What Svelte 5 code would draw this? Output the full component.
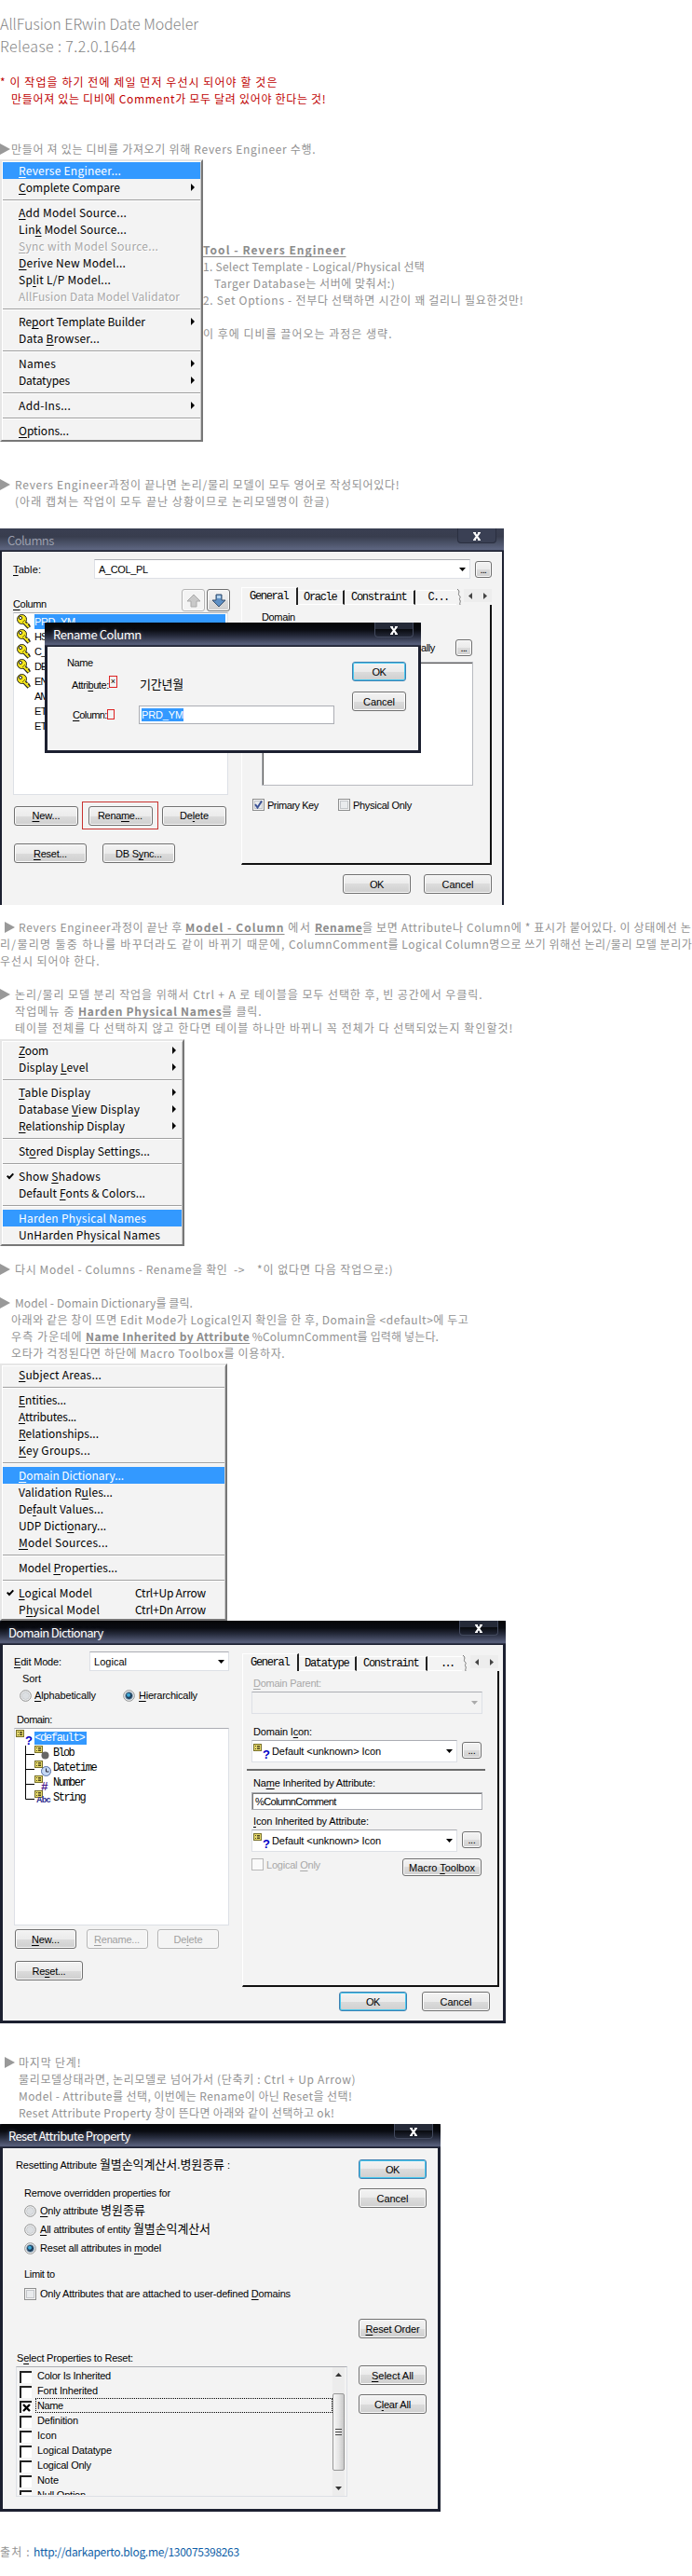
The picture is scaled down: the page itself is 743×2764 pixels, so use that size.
<script>
  const menuReverse = [
    { t: '~Reverse Engineer...', w: 110, on: true },
    { t: '~Complete Compare', w: 109, sub: true },
    null,
    { t: '~Add Model Source...', w: 116 },
    { t: 'Lin~k Model Source...', w: 116 },
    { t: '~Sync with Model Source...', w: 150, off: true },
    { t: '~Derive New Model...', w: 115 },
    { t: 'Sp~lit L/P Model...', w: 99 },
    { t: 'AllFusion Data Model Validator', w: 173, off: true },
    null,
    { t: 'Re~port Template Builder', w: 136, sub: true },
    { t: 'Data ~Browser...', w: 87 },
    null,
    { t: 'Names', w: 40, sub: true },
    { t: 'Datatypes', w: 55, sub: true },
    null,
    { t: 'Add-Ins...', w: 56, sub: true },
    null,
    { t: '~Options...', w: 54 }
  ];
  const menuDisplay = [
    { t: '~Zoom', w: 32, sub: true },
    { t: 'Display ~Level', w: 75, sub: true },
    null,
    { t: '~Table Display', w: 77, sub: true },
    { t: 'Database ~View Display', w: 130, sub: true },
    { t: '~Relationship Display', w: 114, sub: true },
    null,
    { t: 'St~ored Display Settings...', w: 141 },
    null,
    { t: 'Show ~Shadows', w: 88, check: true },
    { t: 'Default ~Fonts & Colors...', w: 136 },
    null,
    { t: 'Harden Physical Names', w: 137, on: true },
    { t: 'UnHarden Physical Names', w: 152 }
  ];
  const menuModel = [
    { t: '~Subject Areas...', w: 89 },
    null,
    { t: '~Entities...', w: 51 },
    { t: '~Attributes...', w: 62 },
    { t: '~Relationships...', w: 86 },
    { t: '~Key Groups...', w: 77 },
    null,
    { t: '~Domain Dictionary...', w: 113, on: true },
    { t: 'Validation R~ules...', w: 101 },
    { t: 'De~fault Values...', w: 91 },
    { t: 'UDP Dicti~onary...', w: 94 },
    { t: '~Model Sources...', w: 96 },
    null,
    { t: 'Model ~Properties...', w: 106 },
    null,
    { t: '~Logical Model', w: 79, check: true, key: 'Ctrl+Up Arrow' },
    { t: 'P~hysical Model', w: 87, key: 'Ctrl+Dn Arrow' }
  ];
  const columns = [
    { t: 'PRD_YM', w: 44, key: true },
    { t: 'HS', w: 14, key: true },
    { t: 'C_', w: 13, key: true },
    { t: 'DE', w: 14, key: true },
    { t: 'EN', w: 14, key: true },
    { t: 'AM', w: 15 },
    { t: 'ET', w: 13 },
    { t: 'ET', w: 13 }
  ];
  const domains = [
    { t: 'Blob', w: 23, kind: 'blob' },
    { t: 'Datetime', w: 47, kind: 'clock' },
    { t: 'Number', w: 35, kind: 'hash' },
    { t: 'String', w: 35, kind: 'abc' }
  ];
  const props = [
    { t: 'Color Is Inherited', w: 79 },
    { t: 'Font Inherited', w: 65 },
    { t: 'Name', w: 28, on: true },
    { t: 'Definition', w: 44 },
    { t: 'Icon', w: 21 },
    { t: 'Logical Datatype', w: 80 },
    { t: 'Logical Only', w: 58 },
    { t: 'Note', w: 23 },
    { t: 'Null Option', w: 52 }
  ];

  // Splits a caption at each ~ so that the following letter is underlined.
  function parts(s) {
    return s.split('~').map((p, i) => (i ? [p[0], p.slice(1)] : ['', p]));
  }

  // Tracks a run of text so that it fills the given width.
  function fit(node, w) {
    const n = [...node.textContent].length;
    const natural = node.getBoundingClientRect().width;
    if (n > 1) node.style.letterSpacing = (w - natural) / (n - 0.5) + 'px';
    node.style.width = w + 'px';
  }
</script>

{#snippet t(s, w)}<span class="t" use:fit={w}>{#each parts(s) as [u, rest]}{#if u}<u>{u}</u>{/if}{rest}{/each}</span>{/snippet}
{#snippet b(s, w)}<b class="t" use:fit={w}>{s}</b>{/snippet}
{#snippet tri()}<svg class="tri" width="11" height="12" viewBox="0 0 11 12"><path d="M0 0L11 6L0 12z" fill="#999" /></svg>{/snippet}

{#snippet menu(items, cls)}
  <div class="menu {cls}">
    {#each items as m}
      {#if m}
        <div class="mi" class:on={m.on} class:off={m.off}>
          <span class="mark">{#if m.check}<svg width="8" height="8" viewBox="0 0 8 8"><path d="M.7 3.6L3 6L7.3 1.4" fill="none" stroke="#000" stroke-width="2" /></svg>{/if}</span>
          {@render t(m.t, m.w)}
          {#if m.key}<span class="short">{@render t(m.key, 76)}</span>{/if}
          {#if m.sub}<svg class="sub" width="4" height="8" viewBox="0 0 4 8"><path d="M0 0L4 4L0 8z" /></svg>{/if}
        </div>
      {:else}
        <div class="sep"></div>
      {/if}
    {/each}
  </div>
{/snippet}

{#snippet title(s, w)}
  <div class="title">
    {@render t(s, w)}
    <span class="close"><svg width="8" height="9" viewBox="0 0 8 9"><path d="M1.3 .8L6.7 8.2M6.7 .8L1.3 8.2" stroke="#fff" stroke-width="2.1" /><path d="M0 .7H3M5 .7H8M0 8.3H3M5 8.3H8" stroke="#fff" stroke-width="1.2" /></svg></span>
  </div>
{/snippet}
{#snippet btn(s, w, cls)}<span class="btn {cls}">{@render t(s, w)}</span>{/snippet}
{#snippet caret()}<svg class="caret" width="7" height="4" viewBox="0 0 7 4"><path d="M0 0H7L3.5 4z" fill="currentColor" /></svg>{/snippet}
{#snippet radio(on)}
  <svg class="radio" width="13" height="13" viewBox="0 0 13 13">
    <circle cx="6.5" cy="6.5" r="5.8" fill="#f6f6f6" stroke="#8e8f8f" />
    <circle cx="6.5" cy="6.5" r="4" fill={on ? '#1d3e5c' : '#dcdfe2'} stroke={on ? '#9db7cc' : '#bfc3c7'} stroke-width=".7" />
    {#if on}<circle cx="6" cy="5.8" r="2" fill="#3da9d8" />{/if}
  </svg>
{/snippet}
{#snippet tag()}
  <svg class="tag" width="9" height="8" viewBox="0 0 9 8"><rect x=".5" y=".5" width="8" height="7" fill="#e6d96c" stroke="#77702c" /><path d="M2 2.5H3M4 2.5H7M2 5.5H3M4 5.5H7M4 4H7" stroke="#4a4520" /></svg>
{/snippet}
{#snippet unknown()}
  <span class="unk">{@render tag()}<i>?</i></span>
{/snippet}
{#snippet spin()}
  <svg class="brk" width="6" height="17" viewBox="0 0 6 17"><path d="M1 0C5 3 1 5 3 7C6 9 2 10 4 12C5 14 3 15 4 17" fill="none" stroke="#777" /></svg>
  <span class="spin">
    <svg width="4" height="7" viewBox="0 0 4 7"><path d="M4 0V7L0 3.5z" fill="#444" /></svg>
    <svg width="4" height="7" viewBox="0 0 4 7"><path d="M0 0V7L4 3.5z" fill="#444" /></svg>
  </span>
{/snippet}

<main>
  <header>
    <div>{@render t('AllFusion ERwin Date Modeler', 213)}</div>
    <div>{@render t('Release : 7.2.0.1644', 146)}</div>
  </header>
  <section class="warn">
    <div class="ln">{@render t('* 이 작업을 하기 전에 제일 먼저 우선시 되어야 할 것은', 298)}</div>
    <div class="ln in12">{@render t('만들어져 있는 디비에 Comment가 모두 달려 있어야 한다는 것!', 338)}</div>
  </section>
  <div class="ln s-first">{@render tri()}<span class="g1"></span>{@render t('만들어 져 있는 디비를 가져오기 위해 Revers Engineer 수행.', 327)}</div>
  <div class="beside">
    {@render menu(menuReverse, 'm1')}
    <div class="notes">
      <div class="ln">{@render b('Tool - Revers Engineer', 153)}</div>
      <div class="ln">{@render t('1. Select Template - Logical/Physical 선택', 238)}</div>
      <div class="ln in12">{@render t('Targer Database는 서버에 맞춰서:)', 194)}</div>
      <div class="ln">{@render t('2. Set Options - 전부다 선택하면 시간이 꽤 걸리니 필요한것만!', 344)}</div>
      <div class="ln"></div>
      <div class="ln">{@render t('이 후에 디비를 끌어오는 과정은 생략.', 203)}</div>
    </div>
  </div>

  <section class="s-done">
    <div class="ln">{@render tri()}<span class="g5"></span>{@render t('Revers Engineer과정이 끝나면 논리/물리 모델이 모두 영어로 작성되어있다!', 413)}</div>
    <div class="ln in16">{@render t('(아래 캡쳐는 작업이 모두 끝난 상황이므로 논리모델명이 한글)', 338)}</div>
  </section>

  <div class="dlg d1">
    {@render title('Columns', 50)}
    <div class="body">
      <div class="trow">
        <span class="lbl">{@render t('~Table:', 30)}</span>
        <span class="combo">{@render t('A_COL_PL', 53)}{@render caret()}</span>
        {@render btn('...', 7, 'dots')}
      </div>
      <div class="cols">
        <div class="left">
          <div class="head">
            <span class="lbl">{@render t('~Column', 36)}</span>
            <span class="btn arrow dis"><svg width="16" height="15" viewBox="0 0 16 15"><path d="M8 1L15 8H11V14H5V8H1z" fill="#c9c9c9" stroke="#aaa" /></svg></span>
            <span class="btn arrow"><svg width="16" height="15" viewBox="0 0 16 15"><path d="M5 1H11V7H15L8 14L1 7H5z" fill="#5d8fc4" stroke="#37506e" /><path d="M6 2H10V5H6z" fill="#b5d3ee" /></svg></span>
          </div>
          <div class="list">
            {#each columns as c, i}
              <div class="row">
                <span class="ico">{#if c.key}<svg width="15" height="16" viewBox="0 0 15 16"><path d="M7 8L13 14.5M10 11L12 9.5M11.5 13L14 11.5" stroke="#222" stroke-width="4" /><circle cx="5.5" cy="5.5" r="5" fill="#f3e51c" stroke="#222" /><path d="M7.5 8.5L13 14M10.5 11.5L12 10" stroke="#f3e51c" stroke-width="2" /><circle cx="4" cy="4" r="1.6" fill="#fff" stroke="#222" /><path d="M6 9L9 6" stroke="#77700a" /></svg>{/if}</span>
                <span class="val" class:sel={i === 0}>{@render t(c.t, c.w)}</span>
              </div>
            {/each}
          </div>
          <div class="btns">
            {@render btn('~New...', 30, 'w69')}
            <span class="red">{@render btn('Rena~me...', 48, 'w69')}</span>
            {@render btn('De~lete', 31, 'w69')}
          </div>
          <div class="btns2">
            {@render btn('~Reset...', 36, 'w78')}
            {@render btn('DB S~ync...', 50, 'w78')}
          </div>
        </div>
        <div class="right">
          <div class="tabs">
            <span class="tab cur">{@render t('General', 42)}</span>
            <span class="tab a">{@render t('Oracle', 36)}</span>
            <span class="tab c">{@render t('Constraint', 60)}</span>
            <span class="tab last">{@render t('C...', 23)}</span>
            {@render spin()}
          </div>
          <div class="panel">
            <div class="dom">{@render t('Domain', 36)}</div>
            <div class="ally">{@render t('ally', 15)}{@render btn('...', 7, 'dots')}</div>
            <div class="sunk"></div>
            <div class="checks">
              <span class="cb"><svg width="9" height="9" viewBox="0 0 9 9"><path d="M1 4L3.5 7.5L8 .5" fill="none" stroke="#3c5396" stroke-width="2" /></svg></span>{@render t('Primary Key', 55)}
              <span class="cb two"></span>{@render t('Physical Only', 63)}
            </div>
          </div>
        </div>
      </div>
      <div class="foot">{@render btn('OK', 15, 'w73')}{@render btn('Cancel', 34, 'w73')}</div>
    </div>

    <div class="dlg rename">
      {@render title('Rename Column', 95)}
      <div class="body">
        <div class="fields">
          <div class="nm">{@render t('Name', 28)}</div>
          <div class="at">{@render t('Attri~bute:', 40)}<span class="rb">×</span><span class="kor">{@render t('기간년월', 47)}</span></div>
          <div class="co">{@render t('~Column:', 37)}<span class="rb small"></span><span class="inp"><span class="hl">{@render t('PRD_YM', 45)}</span></span></div>
        </div>
        <div class="side">
          {@render btn('OK', 15, 'def')}
          {@render btn('Cancel', 34, '')}
        </div>
      </div>
    </div>
  </div>

  <section class="s-split">
    <div class="ln in5">{@render tri()}<span class="g4"></span>{@render t('Revers Engineer과정이 끝난 후 ', 179)}{@render b('Model - Column', 106)}{@render t(' 에서 ', 33)}{@render b('Rename', 51)}{@render t('을 보면 Attribute나 Column에 * 표시가 붙어있다. 이 상태에선 논', 353)}</div>
    <div class="ln">{@render t('리/물리명 둘중 하나를 바꾸더라도 같이 바뀌기 때문에, ', 310)}{@render t('ColumnComment를 Logical Column명으로 쓰기 위해선 논리/물리 모델 분리가', 433)}</div>
    <div class="ln">{@render t('우선시 되어야 한다.', 107)}</div>
  </section>
  <section class="s-gap">
    <div class="ln">{@render tri()}<span class="g5"></span>{@render t('논리/물리 모델 분리 작업을 위해서 Ctrl + A 로 테이블을 모두 선택한 후, 빈 공간에서 우클릭.', 502)}</div>
    <div class="ln in16">{@render t('작업메뉴 중 ', 68)}{@render b('Harden Physical Names', 154)}{@render t('를 클릭.', 43)}</div>
    <div class="ln in16">{@render t('테이블 전체를 다 선택하지 않고 한다면 테이블 하나만 바뀌니 꼭 전체가 다 선택되었는지 확인할것!', 535)}</div>
  </section>
  {@render menu(menuDisplay, 'm2')}

  <div class="ln s-again">{@render tri()}<span class="g5"></span>{@render t('다시 Model - Columns - Rename을 확인  ->    ', 260)}{@render t('*이 없다면 다음 작업으로:)', 146)}</div>
  <section class="s-gap">
    <div class="ln">{@render tri()}<span class="g5"></span>{@render t('Model - Domain Dictionary를 클릭.', 191)}</div>
    <div class="ln in12">{@render t('아래와 같은 창이 뜨면 Edit Mode가 Logical인지 확인을 한 후, Domain을 <default>에 두고', 491)}</div>
    <div class="ln in12">{@render t('우측 가운데에 ', 80)}{@render b('Name Inherited by Attribute', 176)}{@render t(' %ColumnComment를 입력해 넣는다.', 203)}</div>
    <div class="ln in12">{@render t('오타가 걱정된다면 하단에 Macro Toolbox를 이용하자.', 294)}</div>
  </section>
  {@render menu(menuModel, 'm3')}

  <div class="dlg d2">
    {@render title('Domain Dictionary', 102)}
    <div class="body">
      <div class="cols">
        <div class="left">
          <div class="edit"><span class="lbl">{@render t('~Edit Mode:', 51)}</span><span class="combo">{@render t('Logical', 35)}{@render caret()}</span></div>
          <div class="sort">{@render t('Sort', 20)}</div>
          <div class="rads">{@render radio(false)}{@render t('~Alphabetically', 66)}<span class="r2">{@render radio(true)}</span>{@render t('~Hierarchically', 63)}</div>
          <div class="dl">{@render t('Domain:', 38)}</div>
          <div class="list">
            <div class="root">{@render unknown()}<span class="hl">{@render t('<default>', 54)}</span></div>
            {#each domains as d, i}
              <div class="node">
                <svg class="branch" width="10" height="16" viewBox="0 0 10 16"><path d={i === 3 ? 'M.5 0V9.5H10' : 'M.5 0V16M0 9.5H10'} fill="none" stroke="#000" /></svg>
                <span class="nico">
                  {@render tag()}
                  {#if d.kind === 'blob'}<svg class="kind" width="9" height="9" viewBox="0 0 9 9"><circle cx="4.5" cy="4.5" r="4" fill="#666" /></svg>
                  {:else if d.kind === 'clock'}<svg class="kind" width="11" height="11" viewBox="0 0 11 11"><circle cx="5.5" cy="5.5" r="5" fill="#c4d8f4" stroke="#536da5" /><path d="M5.5 2.5V6H8.5" fill="none" stroke="#223" /></svg>
                  {:else if d.kind === 'hash'}<i class="kind hash">#</i>
                  {:else}<i class="kind abc">Abc</i>{/if}
                </span>
                {@render t(d.t, d.w)}
              </div>
            {/each}
          </div>
          <div class="btns">{@render btn('~New...', 30, 'w66')}{@render btn('~Rename...', 49, 'w66 dis')}{@render btn('De~lete', 31, 'w66 dis')}</div>
          <div class="btns2">{@render btn('Re~set...', 36, 'w73')}</div>
        </div>
        <div class="right">
          <div class="tabs">
            <span class="tab cur">{@render t('General', 42)}</span>
            <span class="tab a">{@render t('Datatype', 48)}</span>
            <span class="tab c">{@render t('Constraint', 60)}</span>
            <span class="tab last">{@render t('...', 15)}</span>
            {@render spin()}
          </div>
          <div class="panel">
            <div class="pl off">{@render t('~Domain Parent:', 73)}</div>
            <div class="combo dead">{@render caret()}</div>
            <div class="pl l2">{@render t('Domain I~con:', 63)}</div>
            <div class="crow"><span class="combo">{@render unknown()}{@render t('Default <unknown> Icon', 117)}{@render caret()}</span>{@render btn('...', 8, 'dots')}</div>
            <div class="rule"></div>
            <div class="pl l3">{@render t('Na~me Inherited by Attribute:', 131)}</div>
            <div class="inp">{@render t('%ColumnComment', 87)}</div>
            <div class="pl l4">{@render t('~Icon Inherited by Attribute:', 124)}</div>
            <div class="crow"><span class="combo">{@render unknown()}{@render t('Default <unknown> Icon', 117)}{@render caret()}</span>{@render btn('...', 8, 'dots')}</div>
            <div class="mac"><span class="cb dead"></span><span class="off">{@render t('Logical ~Only', 58)}</span>{@render btn('Macro ~Toolbox', 71, 'tool')}</div>
          </div>
        </div>
      </div>
      <div class="foot">{@render btn('OK', 15, 'w73 def')}{@render btn('Cancel', 34, 'w73')}</div>
    </div>
  </div>

  <section class="s-last">
    <div class="ln in5">{@render tri()}<span class="g4"></span>{@render t('마지막 단계!', 67)}</div>
    <div class="ln in20">{@render t('물리모델상태라면, 논리모델로 넘어가서 (단축키 : Ctrl + Up Arrow)', 362)}</div>
    <div class="ln in20">{@render t('Model - Attribute를 선택, 이번에는 Rename이 아닌 Reset을 선택!', 358)}</div>
    <div class="ln in20">{@render t('Reset Attribute Property 창이 뜬다면 아래와 같이 선택하고 ok!', 339)}</div>
  </section>

  <div class="dlg d3">
    {@render title('Reset Attribute Property', 131)}
    <div class="body">
      <div class="form">
        <div class="r0">{@render t('Resetting Attribute ', 90)}<span class="kor">{@render t('월별손익계산서.병원종류', 134)}</span>{@render t(' :', 6)}</div>
        <div class="r1">{@render t('Remove overridden properties for', 157)}</div>
        <div class="rr">{@render radio(false)}{@render t('~Only attribute ', 65)}<span class="kor">{@render t('병원종류', 48)}</span></div>
        <div class="rr">{@render radio(false)}{@render t('~All attributes of entity ', 100)}<span class="kor">{@render t('월별손익계산서', 83)}</span></div>
        <div class="rr">{@render radio(true)}{@render t('Reset all attributes in ~model', 130)}</div>
        <div class="lim">{@render t('Limit to', 33)}</div>
        <div class="cc"><span class="cb"></span>{@render t('Only Attributes that are attached to user-defined ~Domains', 269)}</div>
        <div class="selp">{@render t('S~elect Properties to Reset:', 125)}</div>
        <div class="plist">
          <div class="items">
            {#each props as p}
              <div class="pi"><span class="ob">{#if p.on}<svg width="9" height="9" viewBox="0 0 9 9"><path d="M1 1L8 8M8 1L1 8" stroke="#000" stroke-width="2.4" /></svg>{/if}</span><span class="nm" class:focus={p.on}>{@render t(p.t, p.w)}</span></div>
            {/each}
          </div>
          <div class="scroll">
            <svg width="7" height="4" viewBox="0 0 7 4"><path d="M0 4H7L3.5 0z" fill="#333" /></svg>
            <span class="thumb"><i></i><i></i><i></i></span>
            <svg width="7" height="4" viewBox="0 0 7 4"><path d="M0 0H7L3.5 4z" fill="#333" /></svg>
          </div>
        </div>
      </div>
      <div class="side">
        {@render btn('OK', 15, 'w73 def')}
        {@render btn('Cancel', 34, 'w73 s2')}
        {@render btn('~Reset Order', 58, 'w73 s3')}
        {@render btn('~Select All', 45, 'w73 s4')}
        {@render btn('C~lear All', 39, 'w73 s2')}
      </div>
    </div>
  </div>

  <footer class="ln">{@render t('출처 : ', 36)}<a href="http://darkaperto.blog.me/130075398263">{@render t('http://darkaperto.blog.me/130075398263', 221)}</a></footer>
</main>

<style>
  :global(body) { background: #fff; }
  main {
    width: 743px;
    height: 2764px;
    box-sizing: border-box;
    padding-top: 13px;
    overflow: hidden;
    font: 12px/18px "Noto Sans CJK KR", "Liberation Sans", sans-serif;
    color: #929292;
  }
  .t { display: inline-block; white-space: pre; flex: none; }
  u { text-decoration: underline; text-underline-offset: 1.5px; text-decoration-thickness: 1px; text-decoration-skip-ink: none; }
  b.t { font-weight: 700; text-decoration: underline; text-underline-offset: 2px; text-decoration-thickness: 1px; text-decoration-skip-ink: none; color: #8c8c8c; }
  header { font: 300 16px/24px "Noto Sans CJK KR", "Liberation Sans", sans-serif; height: 48px; color: #858585; }
  header div { height: 24px; display: flex; }
  .ln { display: flex; height: 18px; align-items: center; font-weight: 400; }
  .warn { margin-top: 18px; color: #c00000; }
  .in5 { padding-left: 5px; }
  .in12 { padding-left: 12px; }
  .in16 { padding-left: 16px; }
  .in20 { padding-left: 20px; }
  .g1 { width: 1px; }
  .g4 { width: 4px; }
  .g5 { width: 5px; }
  .tri { flex: none; }
  .s-first { margin-top: 36px; margin-bottom: 2px; }
  .beside { display: flex; }
  .notes { padding-top: 88px; }
  .s-done { margin: 37px 0 20px; }
  .s-split { margin-top: 15px; }
  .s-gap { margin-top: 18px; }
  .s-gap + .menu { margin-top: 3px; }
  .s-again { margin-top: 16px; }
  .s-gap + .m3 { margin-top: 2px; }
  .s-last { margin: 33px 0 3px; }
  footer { margin-top: 34px; }
  footer a { color: #0f5fa8; text-decoration: none; }

  .menu { box-sizing: border-box; padding: 1px; border: 2px solid #e6e6e6; border-right-color: #777; border-bottom-color: #777; background: #f3f3f3; color: #000; box-shadow: inset 1px 1px #fff, inset -1px 0 #ccc; }
  .m1 { width: 218px; }
  .m2 { width: 198px; }
  .m3 { width: 244px; }
  .mi { display: flex; align-items: center; height: 18px; position: relative; }
  .mi.on { background: #3399ff; color: #fff; }
  .mi.off { color: #a8a8a8; text-shadow: 1px 1px #fff; }
  .mark { width: 17px; padding-left: 4px; box-sizing: border-box; display: flex; }
  .sub { margin-left: auto; margin-right: 6px; }
  .short { margin-left: auto; margin-right: 20px; display: flex; }
  .sep { height: 9px; box-sizing: border-box; border-top: 4px solid #f3f3f3; background: linear-gradient(#a0a0a0 1px, #fff 1px 2px, #f3f3f3 2px); }

  .dlg { position: relative; box-sizing: border-box; color: #000; font: 11px/14px "Liberation Sans", "Noto Sans CJK KR", sans-serif; background: #f3f3f3; border: solid #1c2030; border-width: 0 3px 3px; }
  .title { display: flex; align-items: center; justify-content: space-between; height: 26px; box-sizing: border-box; margin: 0 -3px; padding: 0 8px 0 9px; color: #fff; font: 13px/18px "Noto Sans CJK KR", sans-serif; background: linear-gradient(#050608 0, #0a0c12 30%, #262b3c 55%, #59617d 90%, #1c2030 96%); border-radius: 3px 3px 0 0; text-shadow: 0 0 4px #667; }
  .close { align-self: flex-start; width: 42px; height: 16px; box-sizing: border-box; border: 1px solid #434a5e; border-top: 0; border-radius: 0 0 4px 4px; display: flex; justify-content: center; padding-top: 4px; background: linear-gradient(#252a38 45%, #090b10 50%, #232838); }
  .body { display: flex; flex-direction: column; }
  .btn { display: inline-flex; flex: none; align-items: center; justify-content: center; box-sizing: border-box; height: 21px; border: 1px solid #707070; border-radius: 3px; box-shadow: inset 0 0 0 1px #fbfbfb; background: linear-gradient(#f3f3f3, #ebebeb 50%, #dcdcdc 50%, #cfcfcf); color: #000; }
  .btn.def { border-color: #3c7fb1; box-shadow: inset 0 0 0 1px #48c8ee; }
  .btn.dis { color: #a0a0a0; border-color: #b4b4b4; background: #f4f4f4; }
  .w66 { width: 66px; }
  .w69 { width: 69px; }
  .w73 { width: 73px; }
  .w78 { width: 78px; }
  .dots { width: 18px; height: 18px; }
  .combo { display: flex; align-items: center; box-sizing: border-box; height: 21px; background: #fff; border: 1px solid #dde0e6; border-top-color: #abadb3; padding: 0 4px; }
  .caret { margin-left: auto; }
  .cols { display: flex; }
  .list { box-sizing: border-box; background: #fff; border: 1px solid #dde0e6; border-top-color: #abadb3; }
  .tabs { display: flex; align-items: flex-end; height: 19px; font: 12px/14px "Liberation Mono", monospace; }
  .tab { box-sizing: border-box; height: 16px; display: flex; align-items: center; justify-content: center; border-top: 1px solid #fff; border-right: 2px solid #222; border-bottom: 1px solid #fff; }
  .tab.cur { height: 19px; width: 61px; border-bottom: 0; border-left: 1px solid #fff; }
  .tab.last { border-right: 0; }
  .brk { flex: none; }
  .spin { align-self: flex-start; display: flex; align-items: center; justify-content: space-between; box-sizing: border-box; width: 30px; height: 14px; padding: 0 5px; margin: 2px 0 0 2px; background: #ededed; }
  .panel { box-sizing: border-box; border-left: 1px solid #fff; border-right: 2px solid #111; border-bottom: 2px solid #111; }
  .cb { box-sizing: border-box; width: 13px; height: 13px; border: 1px solid #8e8f8f; box-shadow: inset 0 0 0 1px #f4f4f4, inset 0 0 0 2px #c3c6ca; background: #e9ebed; display: inline-flex; align-items: center; justify-content: center; flex: none; }
  .cb.dead { border-color: #b8b8b8; background: #fafafa; box-shadow: none; }
  .foot { display: flex; justify-content: flex-end; }
  .off { color: #a8a8a8; }
  .kor { font-size: 13px; display: inline-flex; }
  .hl { background: #3399ff; color: #fff; display: inline-flex; }

  .d1 { width: 541px; height: 404px; border-width: 0 2px; }
  .d1 > .title { margin: 0 -2px; height: 25px; padding: 0 8px 0 8px; color: #9a9eac; text-shadow: none; background: linear-gradient(#3a3f52 0, #383d4e 35%, #454c60 55%, #5d6580 90%, #1c2030 96%); border-radius: 0; }
  .d1 > .title .close { background: #3a4054; border-color: #2a2f40; }
  .trow { display: flex; align-items: center; margin-top: 8px; padding-left: 12px; height: 21px; }
  .trow .lbl { width: 87px; }
  .trow .combo { width: 404px; margin-right: 5px; }
  .d1 .left { width: 245px; padding-left: 12px; }
  .head { display: flex; align-items: center; margin-top: 11px; height: 24px; gap: 2px; }
  .head .lbl { width: 179px; padding-top: 8px; }
  .btn.arrow { width: 25px; height: 24px; }
  .d1 .list { width: 231px; height: 196px; margin-top: 1px; padding: 1px 2px 0 3px; }
  .row { display: flex; height: 16px; align-items: center; }
  .ico { width: 19px; height: 16px; }
  .val { flex: 1; height: 16px; display: flex; align-items: center; }
  .val.sel { background: #3399ff; color: #fff; }
  .d1 .btns { display: flex; gap: 4px; margin-top: 7px; padding: 0 0 0 1px; align-items: center; height: 30px; }
  .red { display: flex; align-items: center; justify-content: center; box-sizing: border-box; width: 82px; height: 30px; border: 1px solid #c8322f; }
  .d1 .btns2 { display: flex; gap: 17px; margin: 15px 0 0 1px; }
  .d1 .right { width: 269px; padding-top: 9px; }
  .d1 .tab.a { width: 50px; }
  .d1 .tab.c { width: 76px; }
  .d1 .tab.last { width: 44px; padding-left: 6px; }
  .d1 .panel { height: 279px; padding-top: 6px; }
  .dom { padding-left: 21px; height: 14px; }
  .ally { display: flex; align-items: center; height: 18px; margin-top: 17px; padding-left: 192px; }
  .ally .btn { margin-left: 22px; }
  .sunk { box-sizing: border-box; width: 227px; height: 133px; margin: 6px 0 0 21px; background: #fff; border: 1px solid #b8babf; box-shadow: inset 1px 1px #555; }
  .checks { display: flex; align-items: center; height: 13px; margin: 14px 0 0 11px; gap: 3px; }
  .cb.two { margin-left: 18px; }
  .d1 .foot { gap: 14px; margin-top: 10px; padding-right: 11px; }

  .rename { position: absolute; left: 46px; top: 101px; width: 404px; height: 140px; }
  .rename .body { flex-direction: row; }
  .fields { width: 327px; padding-top: 10px; }
  .nm { padding-left: 21px; height: 14px; }
  .at { display: flex; align-items: center; height: 20px; padding-left: 26px; margin-top: 7px; }
  .rb { box-sizing: border-box; width: 9px; height: 13px; border: 1px solid #d22; font-size: 9px; line-height: 11px; text-align: center; margin: -8px 0 0; }
  .rb.small { width: 8px; height: 11px; margin-top: -2px; }
  .at .kor { margin-left: 24px; }
  .co { display: flex; align-items: center; height: 20px; padding-left: 27px; margin-top: 12px; }
  .co .inp { box-sizing: border-box; width: 210px; height: 20px; margin-left: 26px; border: 1px solid #abadb3; background: #fff; padding: 2px; display: flex; }
  .rename .side { display: flex; flex-direction: column; gap: 11px; padding-top: 16px; }
  .rename .side .btn { width: 58px; }

  .d2 { width: 543px; height: 432px; }
  .d2 .left { width: 245px; padding-left: 12px; }
  .edit { display: flex; align-items: center; margin-top: 7px; height: 21px; }
  .edit .lbl { width: 81px; }
  .edit .combo { width: 150px; }
  .sort { height: 14px; padding-left: 9px; margin-top: 1px; }
  .rads { display: flex; align-items: center; height: 14px; gap: 3px; padding-left: 6px; margin-top: 4px; }
  .r2 { margin: 0 1px 0 26px; display: flex; }
  .dl { height: 14px; padding-left: 3px; margin-top: 12px; }
  .d2 .list { width: 231px; height: 212px; margin-top: 2px; padding-left: 1px; }
  .unk { display: inline-flex; width: 20px; height: 17px; position: relative; flex: none; }
  .unk i { position: absolute; left: 10px; top: 5px; font: bold 13px/13px "Liberation Sans", sans-serif; color: #0000c8; }
  .root { display: flex; height: 17px; padding-top: 1px; align-items: center; font: 12px/14px "Liberation Mono", monospace; }
  .root .hl { margin-left: 0; padding-right: 2px; }
  .node { display: flex; height: 16px; padding-left: 10px; align-items: center; font: 12px/14px "Liberation Mono", monospace; }
  .nico { position: relative; width: 20px; height: 16px; display: flex; }
  .kind { position: absolute; left: 7px; top: 6px; }
  .hash { font: bold italic 13px/11px "Liberation Sans", sans-serif; color: #4b1a8c; }
  .abc { left: 2px; top: 5px; font: bold 9px/10px "Liberation Sans", sans-serif; color: #2a2a8c; letter-spacing: -.8px; }
  .d2 .btns { display: flex; gap: 10.5px; margin: 4px 0 0 1px; }
  .d2 .btns2 { margin: 13px 0 0 1px; display: flex; }
  .d2 .right { width: 276px; padding-top: 9px; }
  .d2 .tab.a { width: 62px; }
  .d2 .tab.c { width: 76px; }
  .d2 .tab.last { width: 37px; padding-left: 6px; }
  .d2 .spin { margin-left: 3px; }
  .d2 .panel { height: 339px; padding: 6px 0 0 9px; }
  .pl { height: 14px; padding-left: 2px; }
  .d2 .panel .combo { width: 221px; height: 24px; }
  .d2 .crow .combo { padding-left: 1px; }
  .combo.dead.dead.dead { width: 248px; background: #f3f3f3; color: #aaa; margin-top: 2px; }
  .l2 { margin-top: 12px; }
  .crow { display: flex; gap: 5px; margin-top: 2px; align-items: center; }
  .crow .btn { width: 21px; margin-top: -3px; }
  .rule { width: 256px; height: 2px; background: #6b6b6b; margin: 7px 0 0 -5px; }
  .l3 { margin-top: 6px; }
  .d2 .inp { box-sizing: border-box; width: 248px; height: 19px; margin-top: 3px; border: 1px solid #abadb3; box-shadow: inset 1px 1px #777; background: #fff; padding: 2px 3px; }
  .l4 { margin-top: 5px; }
  .mac { display: flex; align-items: flex-start; margin-top: 7px; height: 20px; gap: 3px; }
  .mac .off { display: flex; }
  .tool { width: 85px; height: 19px; margin-left: 85px; }
  .d2 .foot { gap: 16px; margin-top: 5px; padding-right: 14px; }

  .d3 { width: 473px; height: 416px; }
  .d3 .body { flex-direction: row; }
  .form { width: 382px; padding-left: 14px; box-sizing: border-box; }
  .r0 { display: flex; align-items: center; height: 16px; margin-top: 10px; }
  .r1 { height: 14px; margin: 15px 0 0 9px; }
  .rr { display: flex; align-items: center; height: 20px; gap: 0; padding-left: 9px; }
  .r1 + .rr { margin-top: 2px; }
  .rr .radio { margin-right: 4px; }
  .lim { height: 14px; margin: 11px 0 0 9px; }
  .cc { display: flex; align-items: center; gap: 4px; height: 14px; margin: 7px 0 0 9px; }
  .selp { height: 14px; margin: 55px 0 0 1px; }
  .plist { display: flex; box-sizing: border-box; width: 356px; height: 140px; margin-top: 2px; border: 1px solid #dde0e6; border-top-color: #abadb3; overflow: hidden; }
  .items { width: 339px; padding: 1px 0 0 3px; box-sizing: border-box; height: 137px; overflow: hidden; }
  .pi { display: flex; height: 16px; align-items: center; }
  .ob { box-sizing: border-box; width: 13px; height: 13px; margin: 2px 4px 0 0; background: #fff; border: solid #222; border-width: 2px 0 0 2px; display: flex; align-items: center; justify-content: center; flex: none; }
  .pi .nm { flex: 1; height: 16px; box-sizing: border-box; padding: 0 0 0 1px; border: 1px solid transparent; line-height: 14px; }
  .pi .nm.focus { border: 1px dotted #000; }
  .scroll { display: flex; flex-direction: column; align-items: center; width: 13px; background: #ececec; padding: 6px 0; box-sizing: border-box; height: 138px; }
  .thumb { box-sizing: border-box; width: 13px; height: 83px; margin: 18px 0 auto; border: 1px solid #979797; border-radius: 2px; background: linear-gradient(90deg, #f5f5f5, #e6e6e6 50%, #c8c8c8); display: flex; flex-direction: column; align-items: center; justify-content: center; gap: 2px; }
  .thumb i { width: 7px; height: 1px; background: #444; }
  .d3 .side { display: flex; flex-direction: column; padding-top: 12px; }
  .s2 { margin-top: 10px; }
  .s3 { margin-top: 119px; }
  .s4 { margin-top: 29px; }
</style>
